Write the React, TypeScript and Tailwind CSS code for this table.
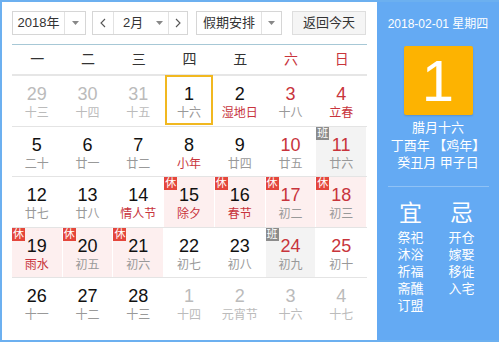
import React from "react";

type Cell = {
  d: string;
  l: string;
  other?: boolean;
  red?: boolean;
  fest?: boolean;
  rest?: boolean;
  work?: boolean;
  sel?: boolean;
};

const rows: Cell[][] = [
  [
    { d: "29", l: "十三", other: true },
    { d: "30", l: "十四", other: true },
    { d: "31", l: "十五", other: true },
    { d: "1", l: "十六", sel: true },
    { d: "2", l: "湿地日", fest: true },
    { d: "3", l: "十八", red: true },
    { d: "4", l: "立春", red: true, fest: true },
  ],
  [
    { d: "5", l: "二十" },
    { d: "6", l: "廿一" },
    { d: "7", l: "廿二" },
    { d: "8", l: "小年", fest: true },
    { d: "9", l: "廿四" },
    { d: "10", l: "廿五", red: true },
    { d: "11", l: "廿六", red: true, work: true },
  ],
  [
    { d: "12", l: "廿七" },
    { d: "13", l: "廿八" },
    { d: "14", l: "情人节", fest: true },
    { d: "15", l: "除夕", fest: true, rest: true },
    { d: "16", l: "春节", fest: true, rest: true },
    { d: "17", l: "初二", red: true, rest: true },
    { d: "18", l: "初三", red: true, rest: true },
  ],
  [
    { d: "19", l: "雨水", fest: true, rest: true },
    { d: "20", l: "初五", rest: true },
    { d: "21", l: "初六", rest: true },
    { d: "22", l: "初七" },
    { d: "23", l: "初八" },
    { d: "24", l: "初九", red: true, work: true },
    { d: "25", l: "初十", red: true },
  ],
  [
    { d: "26", l: "十一" },
    { d: "27", l: "十二" },
    { d: "28", l: "十三" },
    { d: "1", l: "十四", other: true },
    { d: "2", l: "元宵节", other: true },
    { d: "3", l: "十六", other: true },
    { d: "4", l: "十七", other: true },
  ],
];

const font = { fontFamily: '"Liberation Sans", Arial, "Noto Sans CJK SC", sans-serif' };

function Arrow() {
  return (
    <svg width="7" height="4" viewBox="0 0 7 4">
      <path d="M0 0 L7 0 L3.5 4 Z" fill="#888" />
    </svg>
  );
}

function Chevron({ dir }: { dir: "l" | "r" }) {
  return (
    <svg width="6" height="10" viewBox="0 0 6 10">
      <path
        d={dir === "l" ? "M5 1 L1 5 L5 9" : "M1 1 L5 5 L1 9"}
        fill="none"
        stroke="#555"
        strokeWidth="1.1"
      />
    </svg>
  );
}

function DayCell({ c }: { c: Cell }) {
  let bg = "bg-white";
  if (c.rest) bg = "bg-[#fdefef]";
  if (c.work) bg = "bg-[#f3f3f3]";
  const numColor = c.other ? "text-[#bbbbbb]" : c.red ? "text-[#c8343c]" : "text-[#111111]";
  const lunColor = c.other ? "text-[#bbbbbb]" : c.fest ? "text-[#c8343c]" : "text-[#999999]";
  return (
    <div className={`relative h-full border-r border-white ${bg}`}>
      {c.sel && <div className="absolute inset-x-[1px] top-[-1px] bottom-[1px] border-2 border-[#f1b820]" />}
      {c.rest && (
        <div className="absolute left-0 top-0 flex h-[13px] w-[13px] items-center justify-center bg-[#e4463c] text-[11px] leading-none text-white">
          休
        </div>
      )}
      {c.work && (
        <div className="absolute left-0 top-0 flex h-[13px] w-[13px] items-center justify-center bg-[#8c8c8c] text-[11px] leading-none text-white">
          班
        </div>
      )}
      <div className="flex flex-col items-center pt-[8px]">
        <div className={`text-[18px] leading-[20px] ${numColor}`}>{c.d}</div>
        <div className={`mt-[1px] text-[12px] leading-[16px] ${lunColor}`}>{c.l}</div>
      </div>
    </div>
  );
}

export default function App() {
  return (
    <div className="w-[499px] h-[342px] overflow-hidden bg-white" style={font}>
      <div className="flex h-full w-full border-l-2 border-t-2 border-b-2 border-[#6cb0f0]">
        {/* Left panel */}
        <div className="w-[375px] shrink-0 bg-white px-[10px] pt-[9px]">
          {/* toolbar */}
          <div className="flex h-[24px] items-stretch text-[13px] text-[#333]">
            <div className="flex w-[74px] items-stretch border border-[#d6d6d6]">
              <div className="flex w-[51px] items-center justify-center">2018年</div>
              <div className="flex flex-1 items-center justify-center border-l border-[#e2e2e2]">
                <Arrow />
              </div>
            </div>
            <div className="ml-[6px] flex w-[96px] items-stretch border border-[#d6d6d6]">
              <div className="flex w-[21px] items-center justify-center border-r border-[#e2e2e2]">
                <Chevron dir="l" />
              </div>
              <div className="flex w-[54px] items-center pl-[9px]">
                <span>2月</span>
                <span className="ml-[13px] flex items-center">
                  <Arrow />
                </span>
              </div>
              <div className="flex flex-1 items-center justify-center border-l border-[#e2e2e2]">
                <Chevron dir="r" />
              </div>
            </div>
            <div className="ml-[8px] flex w-[86px] items-stretch border border-[#d6d6d6]">
              <div className="flex w-[64px] items-center justify-center">假期安排</div>
              <div className="flex flex-1 items-center justify-center border-l border-[#e2e2e2]">
                <Arrow />
              </div>
            </div>
            <div className="ml-[10px] flex w-[74px] items-center justify-center border border-[#dedede] bg-[#f5f5f5]">
              返回今天
            </div>
          </div>
          {/* separator */}
          <div className="mt-[9px] h-px bg-[#a7c8d6]" />
          {/* weekdays */}
          <div className="grid h-[31px] grid-cols-7 items-center border-b-2 border-[#e6e6e6] text-[14px]">
            {["一", "二", "三", "四", "五", "六", "日"].map((w, i) => (
              <div
                key={w}
                className={`text-center ${i >= 5 ? "text-[#c8343c]" : "text-[#333]"}`}
              >
                {w}
              </div>
            ))}
          </div>
          {/* rows */}
          <div className="flex flex-col">
            {rows.map((r, ri) => (
              <div
                key={ri}
                className={`grid h-[50.5px] grid-cols-7 ${ri < rows.length - 1 ? "border-b border-[#e4e4e4]" : ""}`}
              >
                {r.map((c, ci) => (
                  <DayCell key={ci} c={c} />
                ))}
              </div>
            ))}
          </div>
        </div>
        {/* Right panel */}
        <div className="flex flex-1 flex-col items-center bg-[#64aaf3] text-white">
          <div className="mt-[15px] text-[12px] leading-[14px]">2018-02-01 星期四</div>
          <div className="mt-[15px] flex h-[69px] w-[69px] items-center justify-center rounded-[2px] bg-[#fdb301] shadow-[0_1px_2px_rgba(0,0,0,0.15)]">
            <span className="text-[58px] leading-none font-light">1</span>
          </div>
          <div className="mt-[4px] flex flex-col items-center text-[13px] leading-[17.5px]">
            <div>腊月十六</div>
            <div>丁酉年 【鸡年】</div>
            <div>癸丑月 甲子日</div>
          </div>
          <div className="mt-[14px] h-px w-[101px] bg-[#8fc2f6]" />
          <div className="mt-[13px] flex w-full pl-[8px] text-[13px] leading-[17px]">
            <div className="flex w-[51px] flex-col items-center">
              <div className="mb-[3px] text-[23px] leading-[26px]">宜</div>
              <div>祭祀</div>
              <div>沐浴</div>
              <div>祈福</div>
              <div>斋醮</div>
              <div>订盟</div>
            </div>
            <div className="flex w-[51px] flex-col items-center">
              <div className="mb-[3px] text-[23px] leading-[26px]">忌</div>
              <div>开仓</div>
              <div>嫁娶</div>
              <div>移徙</div>
              <div>入宅</div>
            </div>
          </div>
        </div>
      </div>
    </div>
  );
}
